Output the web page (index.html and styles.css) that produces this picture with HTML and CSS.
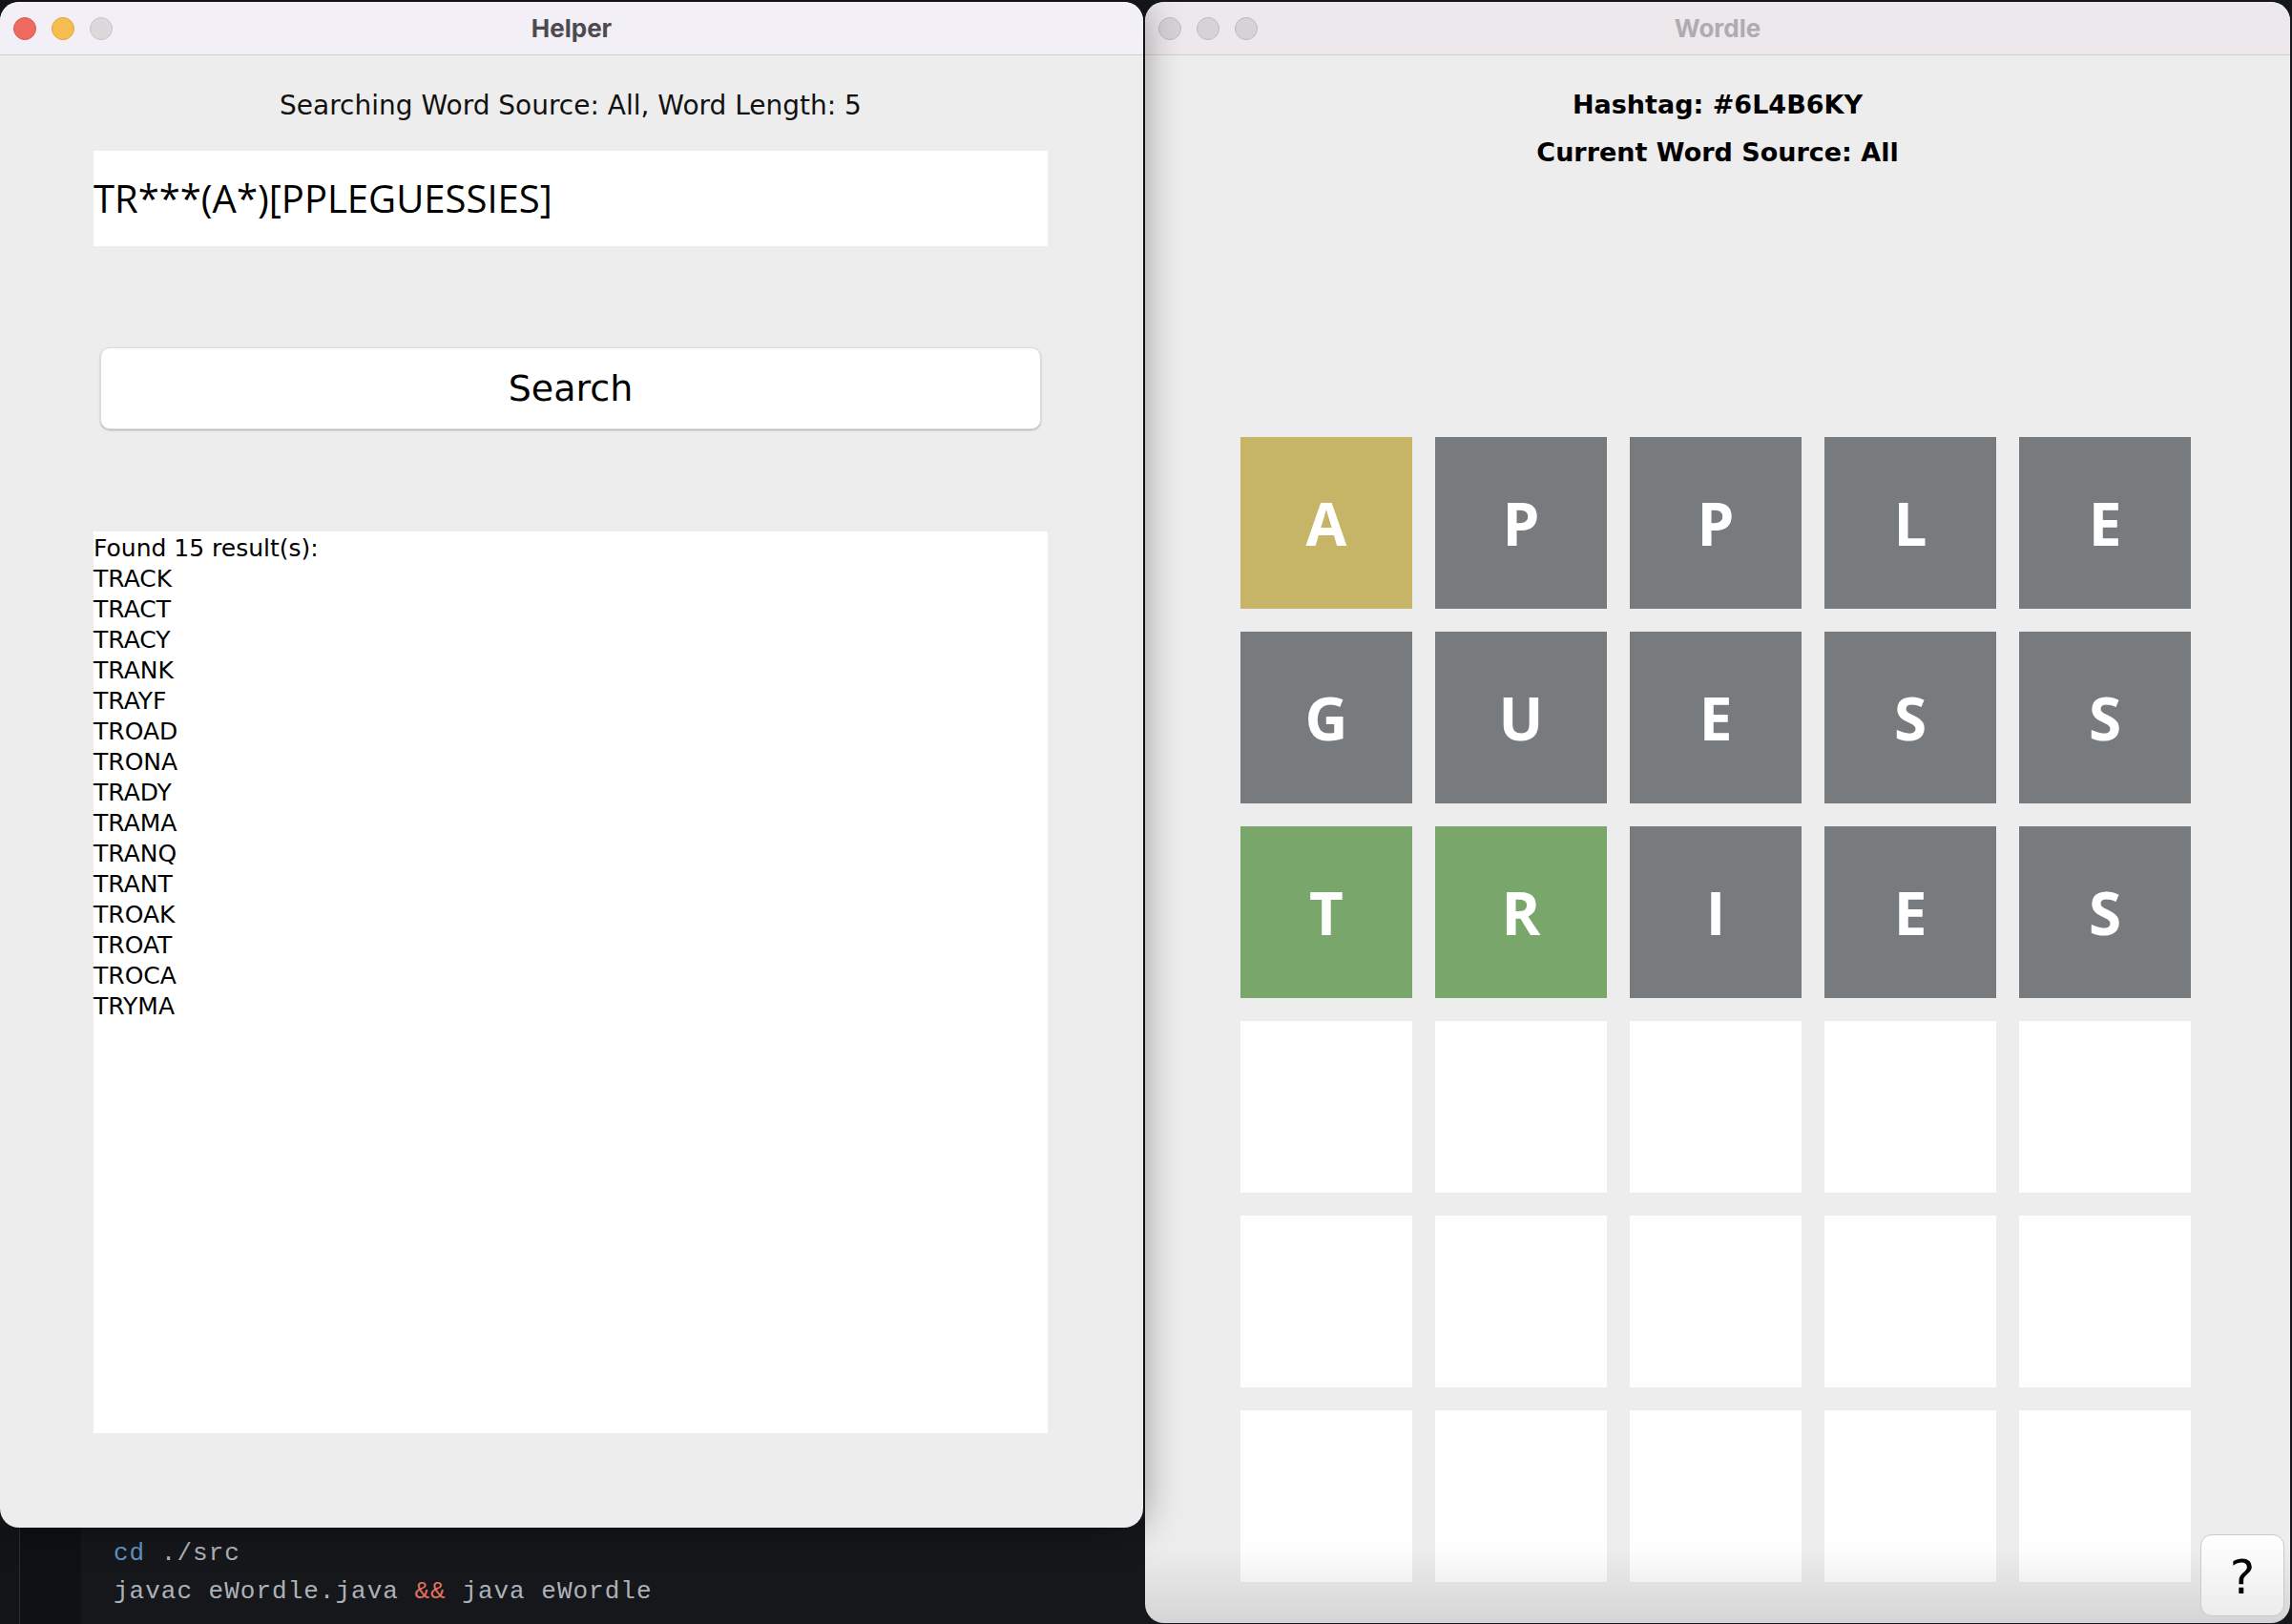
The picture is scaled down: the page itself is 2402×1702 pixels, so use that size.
FILE: index.html
```html
<!DOCTYPE html>
<html lang="en">
<head>
<meta charset="utf-8">
<title>Helper / Wordle</title>
<link rel="stylesheet" href="styles.css">
</head>
<body>
<div class="desktop">
  <div class="left-col">
    <section class="window helper">
      <header class="titlebar active">
        <div class="lights">
          <span class="light red"></span>
          <span class="light yellow"></span>
          <span class="light gray"></span>
        </div>
        <div class="title">Helper</div>
        <div></div>
      </header>
      <main class="helper-body">
        <div class="heading">Searching Word Source: All, Word Length: 5</div>
        <div class="pattern">TR***(A*)[PPLEGUESSIES]</div>
        <button class="search-btn">Search</button>
        <div class="results">
          <div>Found 15 result(s):</div>
          <div>TRACK</div>
          <div>TRACT</div>
          <div>TRACY</div>
          <div>TRANK</div>
          <div>TRAYF</div>
          <div>TROAD</div>
          <div>TRONA</div>
          <div>TRADY</div>
          <div>TRAMA</div>
          <div>TRANQ</div>
          <div>TRANT</div>
          <div>TROAK</div>
          <div>TROAT</div>
          <div>TROCA</div>
          <div>TRYMA</div>
        </div>
      </main>
    </section>
    <div class="terminal">
      <div class="gut1"></div>
      <div class="gut2"></div>
      <div class="code">
        <div><span class="kw">cd</span> ./src</div>
        <div>javac eWordle.java <span class="op">&amp;&amp;</span> java eWordle</div>
      </div>
    </div>
  </div>

  <section class="window wordle">
    <header class="titlebar inactive">
      <div class="lights">
        <span class="light off"></span>
        <span class="light off"></span>
        <span class="light off"></span>
      </div>
      <div class="title">Wordle</div>
      <div></div>
    </header>
    <main class="wordle-body">
      <div class="info">
        <div>Hashtag: #6L4B6KY</div>
        <div>Current Word Source: All</div>
      </div>
      <div class="board">
        <div class="tile yel">A</div>
        <div class="tile gry">P</div>
        <div class="tile gry">P</div>
        <div class="tile gry">L</div>
        <div class="tile gry">E</div>
        <div class="tile gry">G</div>
        <div class="tile gry">U</div>
        <div class="tile gry">E</div>
        <div class="tile gry">S</div>
        <div class="tile gry">S</div>
        <div class="tile grn">T</div>
        <div class="tile grn">R</div>
        <div class="tile gry">I</div>
        <div class="tile gry">E</div>
        <div class="tile gry">S</div>
        <div class="tile"></div>
        <div class="tile"></div>
        <div class="tile"></div>
        <div class="tile"></div>
        <div class="tile"></div>
        <div class="tile"></div>
        <div class="tile"></div>
        <div class="tile"></div>
        <div class="tile"></div>
        <div class="tile"></div>
        <div class="tile"></div>
        <div class="tile"></div>
        <div class="tile"></div>
        <div class="tile"></div>
        <div class="tile"></div>
      </div>
    </main>
    <div class="fade"></div>
    <button class="help-btn">?</button>
  </section>
</div>
</body>
</html>
```

FILE: styles.css
```css
* { box-sizing: border-box; }

html, body {
  margin: 0;
  padding: 0;
}

body {
  width: 2402px;
  height: 1702px;
  overflow: hidden;
  background: #15171b;
  font-family: "Open Sans", sans-serif;
}

.desktop {
  display: flex;
  gap: 2px;
  padding-top: 2px;
  height: 1702px;
}

.left-col {
  width: 1198px;
  display: flex;
  flex-direction: column;
  position: relative;
  z-index: 2;
}

.window {
  border-radius: 20px;
  background: #ededed;
  overflow: hidden;
  position: relative;
}

.helper {
  height: 1599px;
  flex: none;
  display: flex;
  flex-direction: column;
  box-shadow: 0 0 40px rgba(0, 0, 0, 0.38);
}

.wordle {
  width: 1200px;
  height: 1699px;
  z-index: 1;
  display: flex;
  flex-direction: column;
}

/* title bars */
.titlebar {
  height: 56px;
  flex: none;
  border-bottom: 1px solid #d2cfd3;
  display: grid;
  grid-template-columns: 1fr auto 1fr;
  align-items: center;
}

.titlebar.active { background: #f3eff7; }
.titlebar.inactive { background: #ece8ec; }

.lights {
  display: flex;
  gap: 16px;
  padding-left: 14px;
}

.light {
  width: 24px;
  height: 24px;
  border-radius: 50%;
  display: block;
}

.red { background: #ee6a5e; border: 1px solid #d65a4f; }
.yellow { background: #f5be4f; border: 1px solid #d9a441; }
.gray { background: #dcd8dc; border: 1px solid #c6c3c6; }
.off { background: #d6d3d6; border: 1px solid #bdbabd; }

.title {
  font-family: Inter, "Open Sans", sans-serif;
  font-weight: 700;
  font-size: 26px;
  color: #4d4a4f;
}

.inactive .title { color: #afacaf; }

/* helper */
.helper-body {
  flex: 1;
  padding-left: 98px;
  display: flex;
  flex-direction: column;
  align-items: flex-start;
}

.heading {
  width: 1000px;
  height: 100px;
  padding-top: 4px;
  display: flex;
  align-items: center;
  justify-content: center;
  font-family: "Comic Sans MS", "DejaVu Sans", sans-serif;
  font-size: 28px;
  color: #111;
}

.pattern {
  width: 1000px;
  height: 100px;
  background: #fff;
  display: flex;
  align-items: center;
  font-family: "Open Sans", sans-serif;
  font-size: 40px;
  line-height: 1;
  color: #000;
}

.search-btn {
  margin: 106px 0 0 7px;
  width: 986px;
  height: 86px;
  padding: 0;
  background: #fff;
  border: 1px solid #dddddd;
  border-radius: 10px;
  box-shadow: 0 1px 2px rgba(0, 0, 0, 0.28);
  font-family: "Comic Sans MS", "DejaVu Sans", sans-serif;
  font-size: 38px;
  color: #000;
}

.results {
  margin-top: 107px;
  padding-top: 2px;
  width: 1000px;
  height: 945px;
  background: #fff;
  font-family: "DejaVu Sans", sans-serif;
  font-size: 25px;
  line-height: 32px;
  color: #000;
}

/* terminal */
.terminal {
  flex: 1;
  display: flex;
}

.gut1 {
  width: 21px;
  background: #121418;
  border-right: 1px solid #2a2d33;
}

.gut2 {
  width: 64px;
  background: #0f1114;
}

.code {
  padding: 7px 0 0 34px;
  font-family: "Liberation Mono", monospace;
  font-size: 26px;
  letter-spacing: 1px;
  line-height: 40px;
  color: #adb2b8;
}

.kw { color: #5f93c8; }
.op { color: #e2705e; }

/* wordle */
.wordle-body {
  flex: 1;
  display: flex;
  flex-direction: column;
  align-items: flex-start;
}

.info {
  align-self: stretch;
  padding-top: 27px;
  text-align: center;
  font-family: "Comic Sans MS", "DejaVu Sans", sans-serif;
  font-weight: 700;
  font-size: 27px;
  line-height: 50px;
  color: #000;
}

.board {
  margin: 273px 0 0 100px;
  display: grid;
  grid-template-columns: repeat(5, 180px);
  grid-auto-rows: 180px;
  gap: 24px;
}

.tile {
  background: #fefefe;
  display: flex;
  align-items: center;
  justify-content: center;
  font-family: "Open Sans", sans-serif;
  font-weight: 700;
  font-size: 62px;
  color: #fff;
}

.yel { background: #c6b566; }
.gry { background: #787b7e; }
.grn { background: #79a76b; }

.fade {
  position: absolute;
  left: 0;
  right: 0;
  bottom: 0;
  height: 80px;
  background: linear-gradient(rgba(0, 0, 0, 0), rgba(0, 0, 0, 0.1));
  pointer-events: none;
}

.help-btn {
  position: absolute;
  right: 6px;
  bottom: 7px;
  width: 88px;
  height: 86px;
  padding: 4px 0 0 0;
  border-radius: 12px;
  border: 1px solid #c9c9c9;
  background: linear-gradient(#ffffff, #ececec);
  display: flex;
  align-items: center;
  justify-content: center;
  font-family: "Comic Sans MS", "DejaVu Sans", sans-serif;
  font-size: 50px;
  color: #000;
}
```
